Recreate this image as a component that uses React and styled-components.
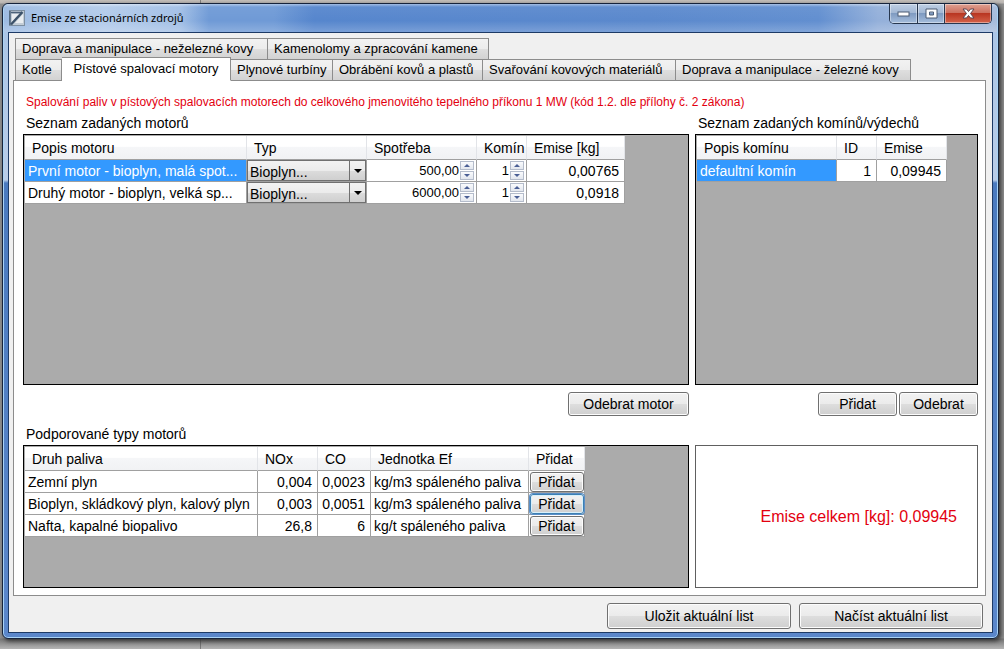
import React from "react";
import styled, { createGlobalStyle, css } from "styled-components";

const GlobalStyle = createGlobalStyle`
  * { box-sizing: border-box; }
  html, body { margin: 0; }
  body { background: #a3a3a3; font-family: "Liberation Sans", Arial, sans-serif; font-size: 14px; line-height: 16px; color: #000; }
  button, input, select { font: inherit; color: inherit; margin: 0; }
`;

const Desktop = styled.div`
  min-height: 100vh;
  display: flex;
  flex-direction: column;
  padding: 3px 5px 10px 2px;
  background:
    linear-gradient(90deg, transparent 200px, rgba(70,70,70,.5) 200px, rgba(70,70,70,.5) 201px, transparent 201px),
    linear-gradient(#c4bfba 0, #b9b5b2 3px, #8f8f8f 4px, #8f8f8f calc(100% - 11px), #767676 calc(100% - 10px), #b4b4b4 100%);
`;

const Window = styled.main`
  flex: 1;
  display: flex;
  flex-direction: column;
  padding: 0 5px 5px 5px;
  border: 1px solid #16233b;
  border-radius: 6px;
  background: linear-gradient(#a9c4e6 0, #b9cde8 176px, #4a7abf 179px, #5b87cb 100%);
  box-shadow: inset 0 0 0 1px #a9d3f5, 2px 2px 4px #333;
`;

const TitleBar = styled.header`
  display: flex;
  align-items: flex-start;
  height: 28px;
  margin: 0 -4px;
  padding: 0 5px 0 5px;
  border-radius: 5px 5px 0 0;
  background:
    linear-gradient(rgba(255,255,255,.45) 0, rgba(255,255,255,.05) 3px, rgba(255,255,255,0) 60%, rgba(255,255,255,.2) 100%),
    linear-gradient(90deg, #9dbbe2 0, #b3cbea 100px, #a3c0e6 175px, #6f9ad6 205px, #6f9ad6 270px, #5686cd 310px, #5b89cd 65%, #628fd0 82%, #94b0da 88%, #a6bcdc 100%);
`;

const Title = styled.h1`
  flex: 1;
  margin: 0;
  padding: 6px 0 0 6px;
  font: 400 11px/16px "Noto Sans", "Open Sans", sans-serif;
`;

const AppIcon = styled.svg`
  width: 16px;
  height: 16px;
  margin-top: 6px;
`;

const CaptionGroup = styled.div`
  display: flex;
  height: 20px;
  border: 1px solid #27374f;
  border-top: 0;
  border-radius: 0 0 5px 5px;
  overflow: hidden;
`;

const CaptionButton = styled.button`
  display: flex;
  align-items: center;
  justify-content: center;
  width: ${(p) => (p.$close ? 47 : 27)}px;
  padding: 0;
  border: 0;
  border-left: ${(p) => (p.$first ? "0" : "1px solid #27374f")};
  background: ${(p) =>
    p.$close
      ? "linear-gradient(#dfa192 0, #cd7160 45%, #b93621 50%, #d4624a 100%)"
      : "linear-gradient(#bfcfe4 0, #a3b8d4 45%, #7f9bc1 50%, #a5bddc 100%)"};
  box-shadow: inset 0 0 0 1px rgba(255, 255, 255, 0.4);
`;

const Client = styled.div`
  flex: 1;
  display: flex;
  flex-direction: column;
  padding: 5px 6px 3px 4px;
  border: 1px solid #1d3a66;
  background: #f0f0f0;
`;

const TabRow = styled.div`
  display: flex;
  align-items: flex-end;
  height: 21px;
  padding-left: 2px;
`;

const Tab = styled.button`
  width: ${(p) => p.$w}px;
  height: ${(p) => (p.$active ? 24 : 22)}px;
  margin-bottom: -1px;
  padding: 0 0 0 6px;
  font-size: 13px;
  text-align: left;
  white-space: nowrap;
  border: 1px solid #8c8c8c;
  border-left-width: ${(p) => (p.$first ? 1 : 0)}px;
  background: linear-gradient(#f2f2f2 0, #ececec 50%, #dedede 52%, #d2d2d2 100%);
  ${(p) =>
    p.$active &&
    css`
      position: relative;
      padding: 0;
      text-align: center;
      background: #fff;
      border-bottom-color: #fff;
    `}
`;

const Panel = styled.section`
  flex: 1;
  display: grid;
  grid-template-columns: minmax(0, 1fr) 283px;
  grid-template-rows: auto minmax(0, 1fr) auto;
  column-gap: 6px;
  padding: 13px 7px 7px 9px;
  border: 1px solid #8c8c8c;
  background: #fff;
`;

const Notice = styled.p`
  grid-column: 1 / -1;
  margin: 0;
  padding-left: 3px;
  font-size: 12px;
  color: #e3000f;
`;

const Section = styled.section`
  display: flex;
  flex-direction: column;
  min-width: 0;
`;

const Caption = styled.h2`
  margin: 0;
  padding: 5px 0 3px 3px;
  font-size: 14px;
  font-weight: 400;
  line-height: 16px;
`;

const GridBox = styled.div`
  flex: 1;
  min-height: 143px;
  padding: 1px;
  border: 1px solid #000;
  background: #ababab;
  overflow: hidden;
`;

const Table = styled.table`
  table-layout: fixed;
  width: ${(p) => p.$w}px;
  border-collapse: separate;
  border-spacing: 0;
  background: #fff;
`;

const Th = styled.th`
  width: ${(p) => p.$w}px;
  height: 24px;
  padding: 0 0 0 7px;
  text-align: left;
  font-weight: 400;
  white-space: nowrap;
  border-right: 1px solid #e2e4e8;
  border-bottom: 1px solid #a0a0a0;
  background: linear-gradient(#fff 0, #fff 45%, #f5f6f8 50%, #f1f2f4 100%);
`;

const Td = styled.td`
  height: 22px;
  padding: ${(p) => (p.$control ? "0" : p.$num ? "0 5px 0 0" : "0 0 0 3px")};
  text-align: ${(p) => (p.$num ? "right" : "left")};
  white-space: nowrap;
  border-right: 1px solid #a0a0a0;
  border-bottom: 1px solid #a0a0a0;
  background: ${(p) => (p.$selected ? "#3399ff" : "#fff")};
  color: ${(p) => (p.$selected ? "#fff" : "#000")};
`;

const SelectWrap = styled.div`
  display: grid;
  align-items: center;
  height: 21px;
  border: 1px solid #707070;
  background: linear-gradient(#f2f2f2 0, #ebebeb 50%, #dcdcdc 52%, #cfcfcf 100%);

  > * { grid-area: 1 / 1; }
`;

const Select = styled.select`
  width: 100%;
  height: 19px;
  padding: 2px 18px 0 2px;
  appearance: none;
  border: 0;
  border-radius: 0;
  background: transparent;
`;

const Arrow = styled.span`
  justify-self: end;
  display: flex;
  align-items: center;
  justify-content: center;
  width: 16px;
  height: 19px;
  border-left: 1px solid #707070;
  pointer-events: none;
`;

const Spinner = styled.div`
  display: flex;
  align-items: center;
  height: 21px;
  padding-right: 2px;
`;

const SpinInput = styled.input`
  flex: 1;
  min-width: 0;
  width: 0;
  height: 18px;
  padding: 0 1px 0 0;
  border: 0;
  font-size: 13px;
  text-align: right;
  background: transparent;
`;

const SpinButtons = styled.div`
  display: flex;
  flex-direction: column;
  gap: 1px;
`;

const SpinButton = styled.button`
  display: flex;
  align-items: center;
  justify-content: center;
  width: 14px;
  height: 9px;
  padding: 0;
  border: 1px solid #b4bccb;
  background: linear-gradient(#fafbfd, #e3e7ee);
`;

const Actions = styled.div`
  display: flex;
  justify-content: flex-end;
  gap: 2px;
  padding-top: 7px;
  height: 36px;
`;

const Button = styled.button`
  width: ${(p) => p.$w}px;
  height: ${(p) => p.$h || 24}px;
  padding: 0;
  white-space: nowrap;
  border: 1px solid #707070;
  border-radius: 3px;
  background: linear-gradient(#f2f2f2 0, #ebebeb 50%, #dddddd 52%, #cfcfcf 100%);
  box-shadow: inset 0 0 0 1px #fcfcfc;
`;

const CellButton = styled(Button)`
  display: block;
  width: 54px;
  height: 20px;
  margin: 0 auto;
  ${(p) =>
    p.$focused &&
    css`
      border-color: #3c7fb1;
      box-shadow: inset 0 0 0 1px #d8f0fc, 0 0 0 1px #5a8fc8;
    `}
`;

const Total = styled.output`
  flex: 1;
  display: flex;
  align-items: center;
  justify-content: flex-end;
  margin-top: 24px;
  padding-right: 20px;
  border: 1px solid #606060;
  font-size: 16px;
  color: #e3000f;
`;

const Footer = styled.footer`
  display: flex;
  justify-content: flex-end;
  gap: 8px;
  padding: 7px 3px 0 0;
`;

const Triangle = ({ up, w = 6, h = 3, color = "#4a5f95" }) => (
  <svg width={w} height={h} viewBox="0 0 8 4" preserveAspectRatio="none" aria-hidden="true">
    <path d={up ? "M0 4 4 0 8 4Z" : "M0 0 4 4 8 0Z"} fill={color} />
  </svg>
);

const Spin = ({ value, label }) => (
  <Spinner>
    <SpinInput type="text" inputMode="decimal" aria-label={label} defaultValue={value} />
    <SpinButtons>
      <SpinButton type="button" aria-label={`${label} +`}><Triangle up /></SpinButton>
      <SpinButton type="button" aria-label={`${label} -`}><Triangle /></SpinButton>
    </SpinButtons>
  </Spinner>
);

const engines = [
  { name: "První motor - bioplyn, malá spot...", use: "500,00", stack: "1", emission: "0,00765", selected: true },
  { name: "Druhý motor - bioplyn, velká sp...", use: "6000,00", stack: "1", emission: "0,0918" },
];

const fuels = [
  { name: "Zemní plyn", nox: "0,004", co: "0,0023", unit: "kg/m3 spáleného paliva" },
  { name: "Bioplyn, skládkový plyn, kalový plyn", nox: "0,003", co: "0,0051", unit: "kg/m3 spáleného paliva", focused: true },
  { name: "Nafta, kapalné biopalivo", nox: "26,8", co: "6", unit: "kg/t spáleného paliva" },
];

export default function App() {
  return (
    <Desktop>
      <GlobalStyle />
      <Window>
        <TitleBar>
          <AppIcon viewBox="0 0 16 16" aria-hidden="true">
            <rect x="0.5" y="0.5" width="15" height="15" fill="#c3cdd6" stroke="#7d8fa1" />
            <path d="M1 1v14" stroke="#4a6078" strokeWidth="1.5" />
            <path d="M3 4h7L3 12Z" fill="#e9edf0" />
            <path d="M14 4v9H6Z" fill="#e9edf0" />
            <path d="M2 2.500h11" stroke="#4a6078" strokeWidth="1.500" />
            <path d="M2 14.500 13.500 2" stroke="#3c5269" strokeWidth="2.400" />
          </AppIcon>
          <Title>Emise ze stacionárních zdrojů</Title>
          <CaptionGroup>
            <CaptionButton $first type="button" aria-label="Minimalizovat">
              <svg width="13" height="7" viewBox="0 0 13 7"><rect x="1" y="2" width="11" height="4" fill="#fff" stroke="#4c5c74" /></svg>
            </CaptionButton>
            <CaptionButton type="button" aria-label="Maximalizovat">
              <svg width="13" height="11" viewBox="0 0 13 11"><path d="M1 1h11v9H1ZM4.500 4v3h4V4Z" fillRule="evenodd" fill="#fff" stroke="#4c5c74" /></svg>
            </CaptionButton>
            <CaptionButton $close type="button" aria-label="Zavřít">
              <svg width="13" height="11" viewBox="0 0 13 11">
                <path d="M1 1h3.500l2 2.500L8.500 1H12L8.500 5.500 12 10H8.500l-2-2.500L4.500 10H1l3.500-4.500Z" fill="#fff" stroke="#5c4550" />
              </svg>
            </CaptionButton>
          </CaptionGroup>
        </TitleBar>

        <Client>
          <TabRow>
            <Tab $first $w={253} type="button">Doprava a manipulace - neželezné kovy</Tab>
            <Tab $w={221} type="button">Kamenolomy a zpracování kamene</Tab>
          </TabRow>
          <TabRow>
            <Tab $first $w={47} type="button">Kotle</Tab>
            <Tab $active $w={169} type="button">Pístové spalovací motory</Tab>
            <Tab $w={102} type="button">Plynové turbíny</Tab>
            <Tab $w={150} type="button">Obrábění kovů a plastů</Tab>
            <Tab $w={193} type="button">Svařování kovových materiálů</Tab>
            <Tab $w={235} type="button">Doprava a manipulace - železné kovy</Tab>
          </TabRow>

          <Panel>
            <Notice>
              Spalování paliv v pístových spalovacích motorech do celkového jmenovitého tepelného příkonu 1 MW (kód 1.2. dle přílohy č. 2 zákona)
            </Notice>

            <Section>
              <Caption>Seznam zadaných motorů</Caption>
              <GridBox>
                <Table $w={600}>
                  <thead>
                    <tr>
                      <Th $w={222}>Popis motoru</Th>
                      <Th $w={120}>Typ</Th>
                      <Th $w={110}>Spotřeba</Th>
                      <Th $w={50}>Komín</Th>
                      <Th $w={98}>Emise [kg]</Th>
                    </tr>
                  </thead>
                  <tbody>
                    {engines.map((e) => (
                      <tr key={e.name}>
                        <Td $selected={e.selected}>{e.name}</Td>
                        <Td $control>
                          <SelectWrap>
                            <Select aria-label="Typ"><option>Bioplyn...</option></Select>
                            <Arrow><Triangle w={8} h={4} color="#000" /></Arrow>
                          </SelectWrap>
                        </Td>
                        <Td $control><Spin label="Spotřeba" value={e.use} /></Td>
                        <Td $control><Spin label="Komín" value={e.stack} /></Td>
                        <Td $num>{e.emission}</Td>
                      </tr>
                    ))}
                  </tbody>
                </Table>
              </GridBox>
              <Actions>
                <Button $w={121} type="button">Odebrat motor</Button>
              </Actions>
            </Section>

            <Section>
              <Caption>Seznam zadaných komínů/výdechů</Caption>
              <GridBox>
                <Table $w={250}>
                  <thead>
                    <tr>
                      <Th $w={140}>Popis komínu</Th>
                      <Th $w={40}>ID</Th>
                      <Th $w={70}>Emise</Th>
                    </tr>
                  </thead>
                  <tbody>
                    <tr>
                      <Td $selected>defaultní komín</Td>
                      <Td $num>1</Td>
                      <Td $num>0,09945</Td>
                    </tr>
                  </tbody>
                </Table>
              </GridBox>
              <Actions>
                <Button $w={79} type="button">Přidat</Button>
                <Button $w={79} type="button">Odebrat</Button>
              </Actions>
            </Section>

            <Section>
              <Caption>Podporované typy motorů</Caption>
              <GridBox>
                <Table $w={560}>
                  <thead>
                    <tr>
                      <Th $w={233}>Druh paliva</Th>
                      <Th $w={60}>NOx</Th>
                      <Th $w={53}>CO</Th>
                      <Th $w={158}>Jednotka Ef</Th>
                      <Th $w={56}>Přidat</Th>
                    </tr>
                  </thead>
                  <tbody>
                    {fuels.map((f) => (
                      <tr key={f.name}>
                        <Td>{f.name}</Td>
                        <Td $num>{f.nox}</Td>
                        <Td $num>{f.co}</Td>
                        <Td>{f.unit}</Td>
                        <Td $control><CellButton $focused={f.focused} type="button">Přidat</CellButton></Td>
                      </tr>
                    ))}
                  </tbody>
                </Table>
              </GridBox>
            </Section>

            <Section>
              <Total>Emise celkem [kg]: 0,09945</Total>
            </Section>
          </Panel>

          <Footer>
            <Button $w={184} $h={26} type="button">Uložit aktuální list</Button>
            <Button $w={184} $h={26} type="button">Načíst aktuální list</Button>
          </Footer>
        </Client>
      </Window>
    </Desktop>
  );
}
